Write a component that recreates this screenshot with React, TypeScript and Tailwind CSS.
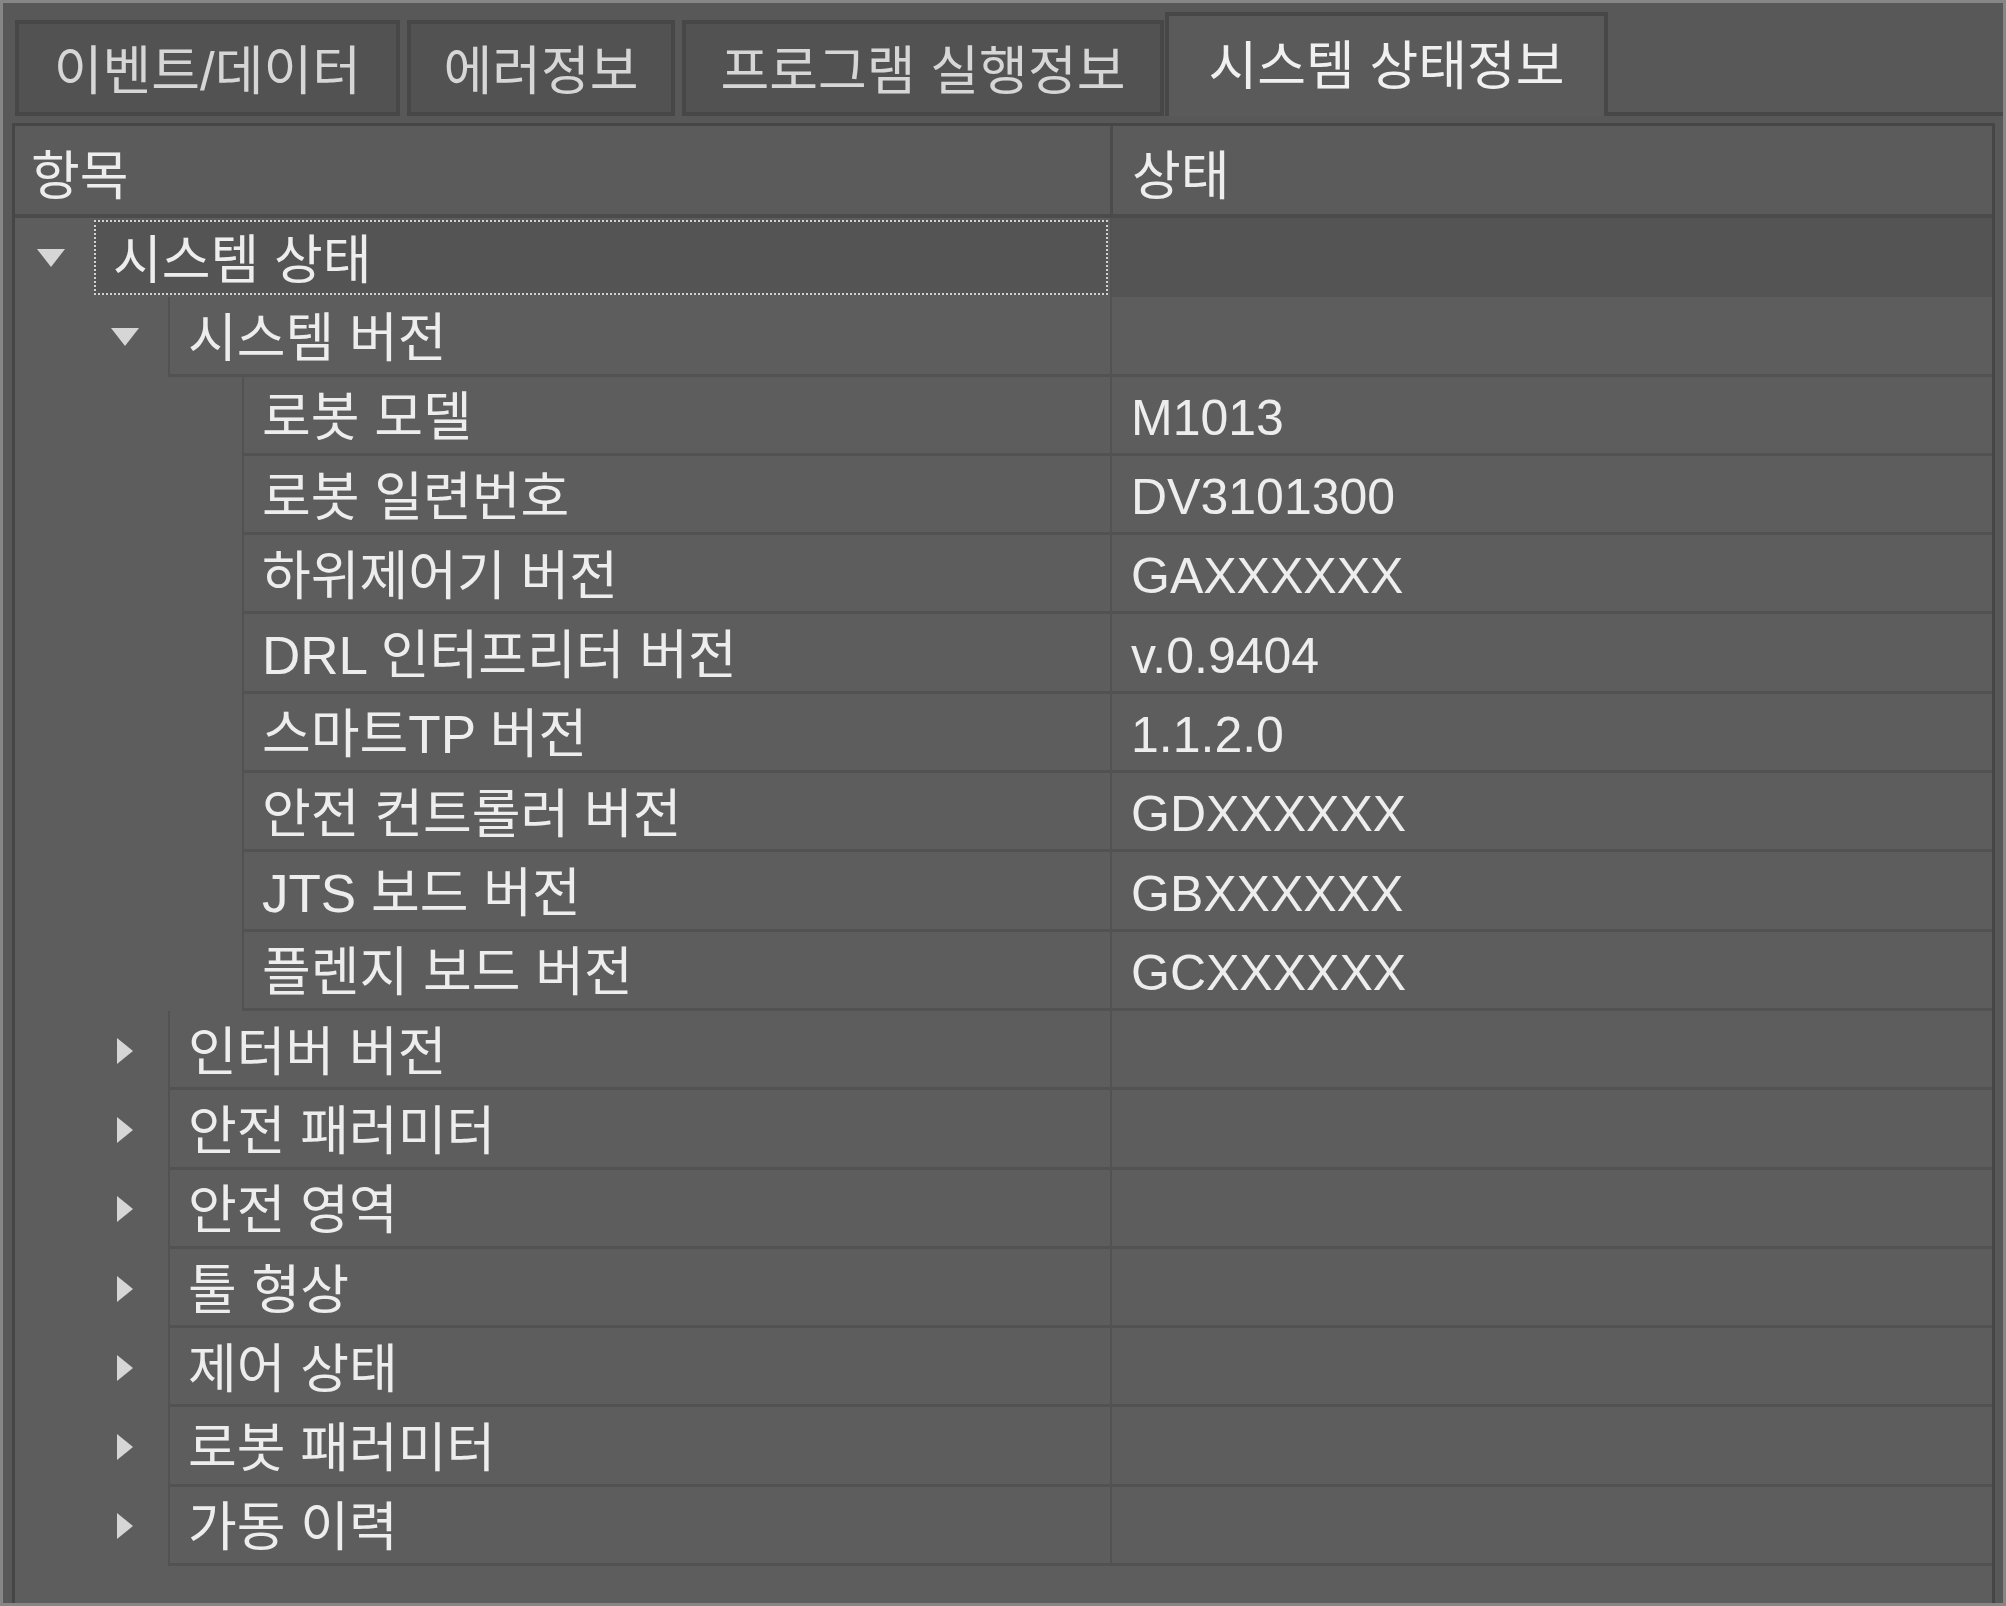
type Row = {
  level: 1 | 2 | 3;
  name: string;
  value?: string;
  arrow?: "down" | "right";
  selected?: boolean;
};

const tabs = [
  { label: "이벤트/데이터", width: "w-[385px]", gap: "ml-0" },
  { label: "에러정보", width: "w-[268px]", gap: "ml-[7px]" },
  { label: "프로그램 실행정보", width: "w-[482px]", gap: "ml-[7px]" },
];

const rows: Row[] = [
  { level: 1, name: "시스템 상태", arrow: "down", selected: true },
  { level: 2, name: "시스템 버전", arrow: "down" },
  { level: 3, name: "로봇 모델", value: "M1013" },
  { level: 3, name: "로봇 일련번호", value: "DV3101300" },
  { level: 3, name: "하위제어기 버전", value: "GAXXXXXX" },
  { level: 3, name: "DRL 인터프리터 버전", value: "v.0.9404" },
  { level: 3, name: "스마트TP 버전", value: "1.1.2.0" },
  { level: 3, name: "안전 컨트롤러 버전", value: "GDXXXXXX" },
  { level: 3, name: "JTS 보드 버전", value: "GBXXXXXX" },
  { level: 3, name: "플렌지 보드 버전", value: "GCXXXXXX" },
  { level: 2, name: "인터버 버전", arrow: "right" },
  { level: 2, name: "안전 패러미터", arrow: "right" },
  { level: 2, name: "안전 영역", arrow: "right" },
  { level: 2, name: "툴 형상", arrow: "right" },
  { level: 2, name: "제어 상태", arrow: "right" },
  { level: 2, name: "로봇 패러미터", arrow: "right" },
  { level: 2, name: "가동 이력", arrow: "right" },
];

const spacer = { 1: "w-[5px]", 2: "w-[79px]", 3: "w-[153px]" } as const;

function Arrow({ dir }: { dir?: "down" | "right" }) {
  if (dir === "down") {
    return (
      <svg width="28" height="18" viewBox="0 0 28 18">
        <polygon points="0,0 28,0 14,18" fill="#d6d6d6" />
      </svg>
    );
  }
  if (dir === "right") {
    return (
      <svg width="16" height="26" viewBox="0 0 16 26">
        <polygon points="0,0 16,13 0,26" fill="#d6d6d6" />
      </svg>
    );
  }
  return null;
}

function TreeRow({ row }: { row: Row }) {
  return (
    <div className="flex h-[79.3px] shrink-0">
      <div className="flex w-[1095px] shrink-0">
        <div className={`${spacer[row.level]} shrink-0`} />
        <div className="flex w-[74px] shrink-0 items-center justify-center pr-[12px]">
          <Arrow dir={row.arrow} />
        </div>
        {row.selected ? (
          <div className="my-[2px] mr-[2px] flex flex-1 items-center border-2 border-dotted border-[#d2d2d2] bg-[#545454] pl-[17px] pt-[6px]">
            <span className="leading-none">{row.name}</span>
          </div>
        ) : (
          <div className="flex flex-1 items-center border-b-[3px] border-l-2 border-[#525252] pl-[18px] pt-[6px]">
            <span className="leading-none">{row.name}</span>
          </div>
        )}
      </div>
      <div
        className={`flex flex-1 items-center border-l-2 border-[#525252] pl-[19px] pt-[6px] text-[50px] ${
          row.selected ? "bg-[#545454]" : "border-b-[3px]"
        }`}
      >
        <span className="leading-none">{row.value}</span>
      </div>
    </div>
  );
}

export default function App() {
  return (
    <div className="flex h-[1606px] w-[2006px] flex-col border-[3px] border-[#868686] bg-[#585858] font-['Liberation_Sans','Noto_Sans_CJK_KR',sans-serif] text-[53px] text-[#ededed]">
      <div className="flex h-[113px] shrink-0 items-end pl-[12px]">
        {tabs.map((tab) => (
          <div
            key={tab.label}
            className={`${tab.width} ${tab.gap} flex h-[96px] shrink-0 items-center justify-center border-4 border-[#474747] bg-[#525252] pt-[6px] text-[53px] text-[#d6d6d6]`}
          >
            <span className="leading-none">{tab.label}</span>
          </div>
        ))}
        <div className="ml-px flex h-[104px] w-[443px] shrink-0 items-center justify-center border-x-4 border-t-4 border-[#474747] bg-[#5a5a5a] text-[53px] text-[#f0f0f0]">
          <span className="leading-none">시스템 상태정보</span>
        </div>
        <div className="h-full flex-1 border-b-4 border-[#474747]" />
      </div>

      <div className="mb-0 ml-[9px] mr-[8px] mt-[7px] flex flex-1 flex-col border-x-[3px] border-t-[3px] border-[#464646] bg-[#5d5d5d]">
        <div className="flex h-[92px] shrink-0 border-b-4 border-[#4b4b4b] bg-[#5b5b5b]">
          <div className="flex w-[1098px] shrink-0 items-center border-r-[3px] border-[#4b4b4b] pl-[16px] pt-[12px]">
            <span className="leading-none">항목</span>
          </div>
          <div className="flex flex-1 items-center pl-[19px] pt-[12px]">
            <span className="leading-none">상태</span>
          </div>
        </div>
        {rows.map((row) => (
          <TreeRow key={row.name} row={row} />
        ))}
      </div>
    </div>
  );
}
